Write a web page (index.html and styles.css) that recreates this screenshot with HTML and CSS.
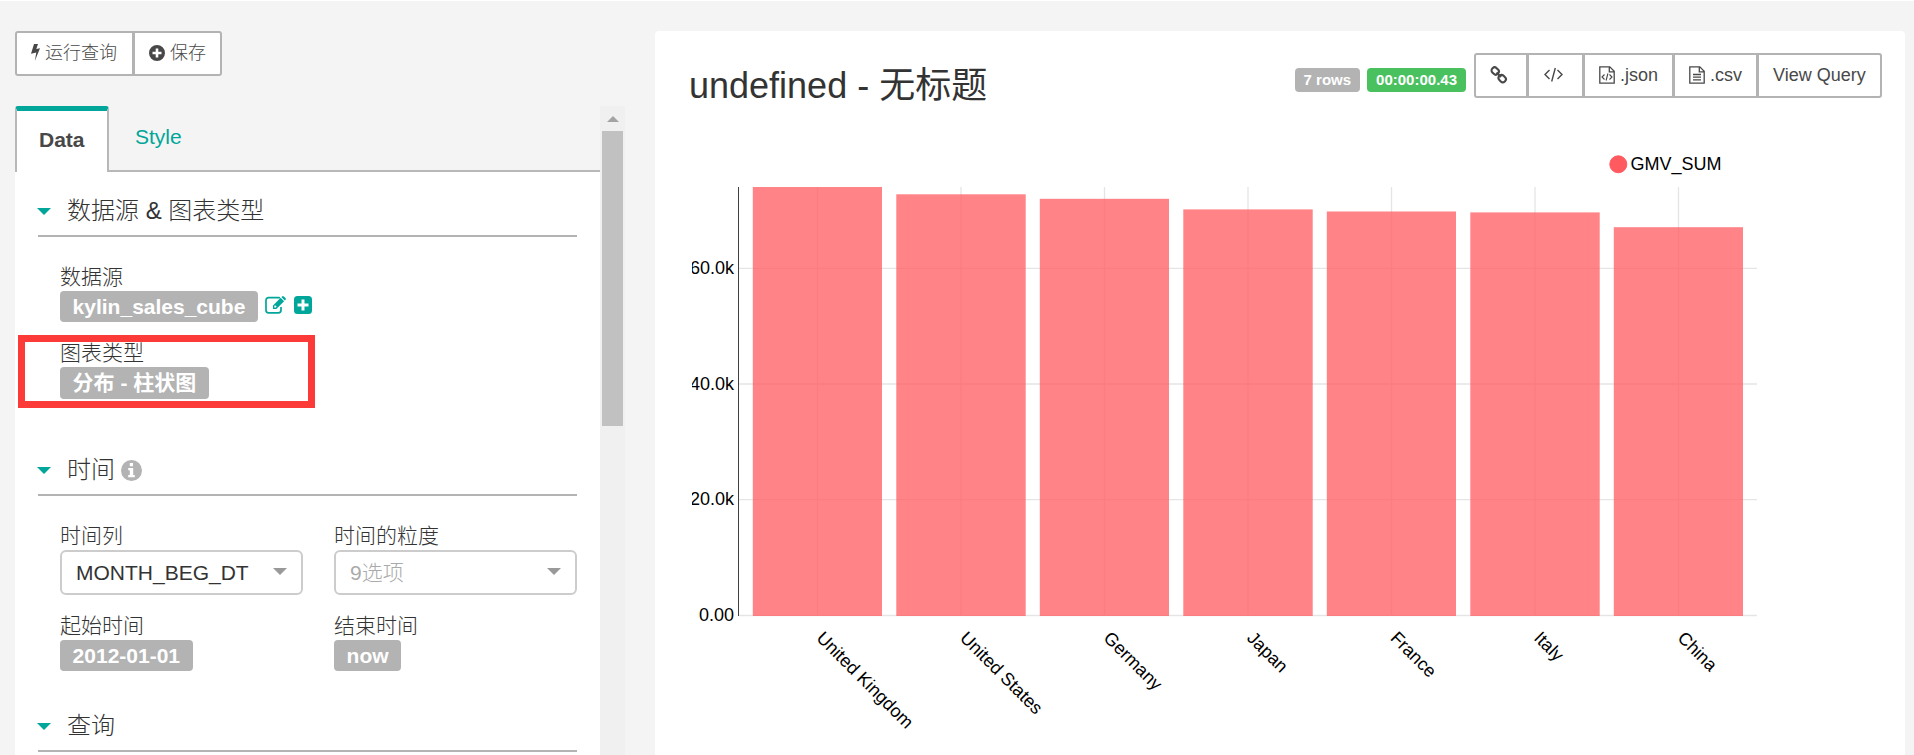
FILE: index.html
```html
<!DOCTYPE html>
<html lang="zh">
<head>
<meta charset="utf-8">
<title>Explore</title>
<link rel="stylesheet" href="styles.css">
</head>
<body>
<div class="page">
  <aside class="side">
    <div class="btn-group">
      <button class="btn run"><svg class="bolt" viewBox="0 0 9 17"><path d="M3 0h4L5.300 5l3.700-.8L3.800 17l1.500-8.600L0 9.700z"/></svg>运行查询</button>
      <button class="btn save"><svg class="plus" viewBox="0 0 16 16"><path fill-rule="evenodd" d="M8 0a8 8 0 1 1 0 16A8 8 0 0 1 8 0zM6.700 3.500v3.200H3.500v2.600h3.200v3.200h2.600V9.300h3.200V6.700H9.300V3.500z"/></svg>保存</button>
    </div>
    <div class="controls">
      <div class="panel">
        <div class="tabs"><div class="tab active">Data</div><div class="tab">Style</div></div>
        <div class="sections">
          <section class="section source">
            <h2 class="title"><i class="caret"></i>数据源 &amp; 图表类型</h2>
            <div class="field"><span class="name">数据源</span>
              <div class="line"><span class="label">kylin_sales_cube</span>
                <svg class="edit" viewBox="0 0 22 18"><path d="M16 11v3.200a2.600 2.600 0 0 1-2.600 2.600H3.600A2.600 2.600 0 0 1 1 14.200V4.200a2.600 2.600 0 0 1 2.600-2.600h9.800q.8 0 1.500.3" fill="none" stroke="#00a699" stroke-width="1.700"/><path fill-rule="evenodd" d="M8 9.500l7.700-7.700 3.400 3.400-7.700 7.700H8zM9.300 10v1.600h1.600l.8-.8-1.600-1.600zM16.400 1.100l.7-.7q.9-.7 1.700 0l1.700 1.700q.7.800 0 1.700l-.7.7z"/></svg>
                <svg class="add" viewBox="0 0 18 18"><path fill-rule="evenodd" d="M3.500 0h11A3.500 3.500 0 0 1 18 3.500v11a3.500 3.500 0 0 1-3.500 3.500h-11A3.500 3.500 0 0 1 0 14.500v-11A3.500 3.500 0 0 1 3.500 0zM7.500 3.500v4h-4v3h4v4h3v-4h4v-3h-4v-4z"/></svg>
              </div>
            </div>
            <div class="field"><span class="name">图表类型</span>
              <div class="line"><span class="label chart-type">分布 - 柱状图</span></div>
              <div class="highlight"></div>
            </div>
          </section>
          <section class="section time">
            <h2 class="title"><i class="caret"></i>时间<svg class="info" viewBox="0 0 21 21"><path fill-rule="evenodd" d="M10.500 0a10.500 10.500 0 1 1 0 21 10.500 10.500 0 0 1 0-21zM8.800 3v3.200H12V3zM7.200 8v2.200h1.600v4.700H7.200v2.300h6.600v-2.300h-1.600V8z"/></svg></h2>
            <div class="columns">
              <div class="field"><span class="name">时间列</span><div class="select">MONTH_BEG_DT<i class="arrow"></i></div></div>
              <div class="field"><span class="name">时间的粒度</span><div class="select empty">9选项<i class="arrow"></i></div></div>
              <div class="field"><span class="name">起始时间</span><div class="line"><span class="label">2012-01-01</span></div></div>
              <div class="field"><span class="name">结束时间</span><div class="line"><span class="label">now</span></div></div>
            </div>
          </section>
          <section class="section">
            <h2 class="title"><i class="caret"></i>查询</h2>
          </section>
        </div>
      </div>
      <div class="scrollbar"><i class="up"></i><div class="thumb"></div></div>
    </div>
  </aside>
  <main class="card">
    <header class="head">
      <h1 class="heading">undefined - 无标题</h1>
      <div class="tools">
        <span class="pill">7 rows</span><span class="pill green">00:00:00.43</span>
        <div class="btn-group">
          <button class="btn link"><svg viewBox="0 0 18 18"><g fill="none" stroke="#484848" stroke-width="2.100"><rect x="1.400" y="2" width="7.600" height="6" rx="2.800" transform="rotate(45 5.200 5)"/><rect x="8.400" y="9.600" width="7.600" height="6" rx="2.800" transform="rotate(45 12.200 12.600)"/><path d="M6.500 6.500l4.500 4.500"/></g></svg></button>
          <button class="btn code"><svg viewBox="0 0 19 16"><path d="M5.500 3L1 7.500 5.500 12M13.500 3L18 7.500 13.500 12M11.300 1L7.700 14.500" fill="none" stroke="#484848" stroke-width="1.400"/></svg></button>
          <button class="btn json"><svg class="file" viewBox="0 0 16 18"><path d="M.8.800h10l4.400 4.400v12H.8zM10.300.8v5h4.900" fill="none" stroke="#484848" stroke-width="1.300"/><path d="M5.500 8.500L3 11l2.500 2.500M10.500 8.500L13 11l-2.500 2.500M8.900 7.500l-1.800 7" fill="none" stroke="#484848" stroke-width="1.100"/></svg>.json</button>
          <button class="btn csv"><svg class="file" viewBox="0 0 16 18"><path d="M.8.800h10l4.400 4.400v12H.8zM10.300.8v5h4.900M4 8.500h8M4 11.200h8M4 13.900h8" fill="none" stroke="#484848" stroke-width="1.300"/></svg>.csv</button>
          <button class="btn view">View Query</button>
        </div>
      </div>
    </header>
    <svg class="chart" width="1190" height="600" viewBox="692 140 1190 600">
      <circle cx="1618.300" cy="164.300" r="8.500" fill="#ff5a5f" stroke="#ff5a5f"/>
      <text x="1630.500" y="170">GMV_SUM</text>
      <g stroke="#e5e5e5" stroke-width="1.300">
        <path d="M739 268.300H1757M739 384H1757M739 499.600H1757M739 615.500H1757"/>
        <path d="M817.500 187V616M961 187V616M1104.500 187V616M1248 187V616M1391.500 187V616M1535 187V616M1678.500 187V616"/>
      </g>
      <g fill="#ff5a5f" fill-opacity=".75">
        <rect x="752.800" y="187" width="129.200" height="429"/>
        <rect x="896.300" y="194.300" width="129.400" height="421.700"/>
        <rect x="1039.800" y="198.800" width="129.200" height="417.200"/>
        <rect x="1183.300" y="209.400" width="129.400" height="406.600"/>
        <rect x="1326.800" y="211.500" width="129.200" height="404.500"/>
        <rect x="1470.300" y="212.400" width="129.400" height="403.600"/>
        <rect x="1613.800" y="227.200" width="129.200" height="388.800"/>
      </g>
      <path d="M738.500 187V616" stroke="#000" stroke-opacity=".75"/>
      <g text-anchor="end">
        <text x="734" y="274">60.0k</text><text x="734" y="390">40.0k</text><text x="734" y="505">20.0k</text><text x="734" y="621">0.00</text>
      </g>
      <g>
        <text transform="translate(815.500 639) rotate(45)">United Kingdom</text>
        <text transform="translate(959 639) rotate(45)">United States</text>
        <text transform="translate(1102.500 639) rotate(45)">Germany</text>
        <text transform="translate(1246 639) rotate(45)">Japan</text>
        <text transform="translate(1389.500 639) rotate(45)">France</text>
        <text transform="translate(1533 639) rotate(45)">Italy</text>
        <text transform="translate(1676.500 639) rotate(45)">China</text>
      </g>
    </svg>
  </main>
</div>
</body>
</html>
```
FILE: styles.css
```css
* { box-sizing: border-box; }
html { overflow: hidden; }
body {
  margin: 0;
  background: #f4f4f4;
  border-top: 1px solid #fff;
  color: #333;
  font: 21px/30px "Liberation Sans", "Noto Sans CJK SC", sans-serif;
}
.page { display: flex; height: 754px; padding: 30px 9px 0 15px; overflow: hidden; }
.side { width: 610px; margin-right: 30px; }
.btn-group { display: flex; }
.btn {
  display: flex;
  align-items: center;
  height: 45px;
  margin: 0 0 0 -1px;
  padding: 0 0 2px 14px;
  background: #fff;
  border: 2px solid #b3b3b3;
  color: #484848;
  font: 18px/24px "Liberation Sans", "Noto Sans CJK SC", sans-serif;
  font-weight: 300;
  white-space: nowrap;
}
.btn:first-child { margin-left: 0; border-radius: 3px 0 0 3px; }
.btn:last-child { border-radius: 0 3px 3px 0; }
svg { display: block; fill: #484848; flex: none; }
.run { width: 119px; }
.save { width: 89px; }
.bolt { width: 9px; height: 17px; margin-right: 5px; }
.plus { width: 16px; height: 16px; margin-right: 5px; }
.controls { display: flex; height: 649px; margin-top: 30px; }
.panel { width: 585px; }
.tabs { display: flex; height: 66px; border-bottom: 2px solid #b8b8b8; }
.tab { padding: 17px 0 0 26px; line-height: 28px; color: #00a699; }
.tab.active {
  width: 94px;
  height: 66px;
  padding: 15px 0 0 22px;
  background: #fff;
  border: 2px solid #b8b8b8;
  border-top: 5px solid #00a699;
  border-bottom: 0;
  border-radius: 3px 3px 0 0;
  color: #484848;
  font-weight: bold;
}
.sections { background: #fff; padding: 0 23px; height: 583px; }
.section.source { height: 259px; }
.section.time { height: 256px; }
.title {
  display: flex;
  align-items: center;
  height: 65px;
  margin: 0 0 22px;
  padding-top: 15px;
  border-bottom: 2px solid #b3b3b3;
  font-size: 24px;
  font-weight: 300;
}
.caret, .arrow { border: 7px solid transparent; border-top-color: #00a699; border-bottom: 0; }
.caret { margin-right: 16px; margin-left: -1px; }
.info { width: 21px; height: 21px; margin-left: 6px; fill: #b3b3b3; }
.field { position: relative; margin-left: 22px; height: 76px; }
.name { display: block; height: 32px; line-height: 35px; font-weight: 300; }
.line { display: flex; align-items: center; }
.label {
  height: 31px;
  padding: 0 12.6px;
  background: #b3b3b3;
  border-radius: 4px;
  color: #fff;
  font-weight: bold;
  line-height: 31px;
}
.chart-type { height: 32px; line-height: 32px; }
.edit, .add { fill: #00a699; margin-bottom: 3px; }
.edit { width: 22px; height: 18px; margin-left: 7px; }
.add { width: 18px; height: 18px; margin-left: 7px; }
.highlight {
  position: absolute;
  left: -42px;
  top: 0;
  width: 297px;
  height: 73px;
  border: 7px solid #fc3a37;
}
.columns { display: grid; grid-template-columns: 265px 265px; gap: 0 9px; }
.columns .field { height: 90px; width: 243px; }
.select {
  display: flex;
  align-items: center;
  justify-content: space-between;
  height: 45px;
  padding: 0 14px;
  border: 2px solid #ccc;
  border-radius: 6px;
}
.empty { color: #aaa; font-weight: 300; }
.arrow { border-top-color: #999; margin-bottom: 3px; }
.scrollbar { width: 25px; padding: 10px 2px 0; background: #f0f0f0; }
.up { display: block; width: 0; margin: 0 auto 9px; border: 6px solid transparent; border-top: 0; border-bottom-color: #a3a3a3; }
.thumb { height: 295px; background: #c1c1c1; }
.card { width: 1250px; height: 724px; background: #fff; border-radius: 4px 4px 0 0; padding: 22px 23px 0 35px; }
.head { display: flex; justify-content: space-between; height: 87px; }
.heading { margin: 12px 0 0 -1px; font-size: 36px; line-height: 42px; font-weight: 400; }
.tools { display: flex; }
.pill {
  height: 24px;
  margin: 15px 7px 0 0;
  padding: 0 9px;
  background: #b3b3b3;
  border-radius: 4px;
  color: #fff;
  font-size: 15px;
  font-weight: bold;
  line-height: 24px;
}
.green { background: #4ac15f; margin-right: 8px; }
.link { width: 54px; padding-left: 14px; }
.link svg { width: 18px; height: 18px; }
.code { width: 57px; padding-left: 15px; }
.code svg { width: 19px; height: 16px; }
.json { width: 91px; }
.csv { width: 85px; }
.file { width: 16px; height: 18px; margin-right: 5px; }
.view { width: 125px; }
.chart { margin-left: 2px; fill: #000; font-size: 18px; }
.chart text { fill: #000; }
```
